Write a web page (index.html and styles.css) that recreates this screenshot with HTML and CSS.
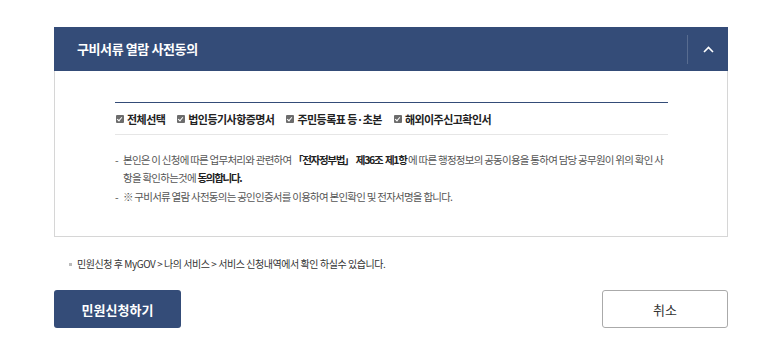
FILE: index.html
```html
<!DOCTYPE html>
<html>
<head>
  <meta charset="utf-8">
  <link rel="stylesheet" href="styles.css">
</head>
<body>
  <div class="wrap">
    <div class="panel">
      <div class="panel-head">
        <h2 class="panel-title">구비서류 열람 사전동의</h2>
        <button class="toggle" type="button">
          <svg width="11" height="7" viewBox="0 0 11 7"><path d="M1 6 L5.5 1.5 L10 6" fill="none" stroke="#fff" stroke-width="1.6"/></svg>
        </button>
      </div>
      <div class="panel-body">
        <div class="check-list">
          <label class="check"><span class="box"></span>전체선택</label>
          <label class="check"><span class="box"></span>법인등기사항증명서</label>
          <label class="check"><span class="box"></span>주민등록표 등·초본</label>
          <label class="check"><span class="box"></span>해외이주신고확인서</label>
        </div>
        <ul class="agree">
          <li>본인은 이 신청에 따른 업무처리와 관련하여 <b>「전자정부법」 제36조 제1항</b> 에 따른 행정정보의 공동이용을 통하여 담당 공무원이 위의 확인 사항을 확인하는것에 <b>동의합니다.</b></li>
          <li>※ 구비서류 열람 사전동의는 공인인증서를 이용하여 본인확인 및 전자서명을 합니다.</li>
        </ul>
      </div>
    </div>

    <p class="note">민원신청 후 MyGOV &gt; 나의 서비스 &gt; 서비스 신청내역에서 확인 하실수 있습니다.</p>

    <div class="actions">
      <button class="btn btn-primary" type="button">민원신청하기</button>
      <button class="btn btn-line" type="button">취소</button>
    </div>
  </div>
</body>
</html>
```

FILE: styles.css
```css
* {
  margin: 0;
  padding: 0;
  box-sizing: border-box;
}

body {
  font-family: "Noto Sans CJK KR", "Noto Sans", sans-serif;
  background: #fff;
  color: #333;
}

.wrap {
  width: 674px;
  margin-left: 54px;
  padding-top: 27px;
}

.panel-head {
  height: 44px;
  background: #344c78;
  display: flex;
  align-items: center;
  justify-content: space-between;
  padding-left: 23px;
}

.panel-title {
  font-size: 13px;
  font-weight: bold;
  color: #fff;
  letter-spacing: -0.4px;
  line-height: 16px;
}

.toggle {
  width: 41px;
  height: 29px;
  border: none;
  border-left: 1px solid rgba(255, 255, 255, 0.18);
  background: transparent;
  display: flex;
  align-items: center;
  justify-content: center;
}

.panel-body {
  height: 166px;
  border: 1px solid #d6d6d6;
  border-top: none;
  padding: 31px 59px 0 60px;
}

.check-list {
  height: 33px;
  border-top: 1px solid #344c78;
  border-bottom: 1px solid #e6e6e6;
  display: flex;
  align-items: center;
  padding-left: 1px;
}

.check {
  display: flex;
  align-items: center;
  font-size: 11px;
  font-weight: bold;
  color: #222;
  letter-spacing: -0.55px;
  margin-right: 12px;
}

.box {
  width: 8px;
  height: 8px;
  border-radius: 1px;
  background: #6c6c6c;
  margin-right: 3px;
  position: relative;
}

.box::after {
  content: "";
  position: absolute;
  left: 2px;
  top: 1px;
  width: 2px;
  height: 4px;
  border: solid #fff;
  border-width: 0 1px 1px 0;
  transform: rotate(40deg);
}

.agree {
  list-style: none;
  margin-top: 16px;
  font-size: 10.5px;
  line-height: 18px;
  color: #555;
  letter-spacing: -0.75px;
}

.agree li {
  position: relative;
  padding-left: 8px;
}

.agree li + li {
  margin-top: 1px;
}

.agree li::before {
  content: "-";
  position: absolute;
  left: 0;
  top: 0;
}

.agree b {
  color: #222;
  letter-spacing: -1.3px;
  word-spacing: 1.5px;
}

.note {
  margin-top: 20px;
  padding-left: 23px;
  position: relative;
  font-size: 10px;
  line-height: 14px;
  color: #333;
  letter-spacing: -0.45px;
}

.note::before {
  content: "";
  position: absolute;
  left: 15px;
  top: 6px;
  width: 3px;
  height: 3px;
  background: #bbb;
}

.actions {
  display: flex;
  justify-content: space-between;
  margin-top: 19px;
}

.btn {
  width: 127px;
  height: 38px;
  border-radius: 3px;
  font-family: inherit;
  font-size: 13px;
}

.btn-primary {
  background: #344c78;
  color: #fff;
  border: none;
  font-weight: bold;
}

.btn-line {
  background: #fff;
  color: #333;
  border: 1px solid #aaa;
  width: 126px;
}
```
